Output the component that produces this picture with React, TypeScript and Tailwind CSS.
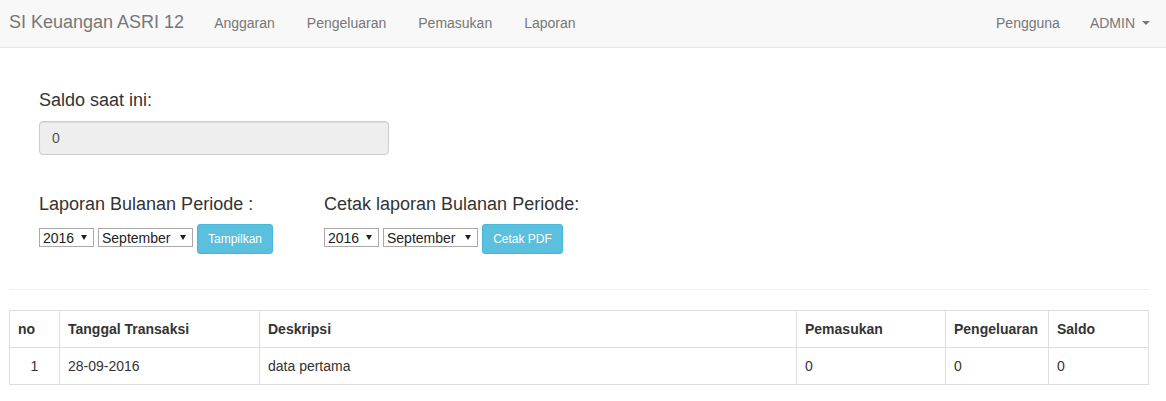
import React from 'react';

const navLinks = ['Anggaran', 'Pengeluaran', 'Pemasukan', 'Laporan'];

const rows = [
  { no: 1, tanggal: '28-09-2016', deskripsi: 'data pertama', masuk: 0, keluar: 0, saldo: 0 },
];

function FakeSelect({ value, width }: { value: string; width: string }) {
  return (
    <div
      className={`${width} h-[19px] mt-[4px] flex items-center justify-between border border-[#a9a9a9] bg-white pl-[3px] pr-[6px] text-[14px] leading-none text-[#222]`}
    >
      <span>{value}</span>
      <svg width="6" height="5" viewBox="0 0 6 5">
        <polygon points="0,0 6,0 3,5" fill="#222" />
      </svg>
    </div>
  );
}

function PeriodForm({ label, button, buttonWidth }: { label: string; button: string; buttonWidth: string }) {
  return (
    <div>
      <h4 className="text-[18px] leading-[20px] text-[#333]">{label}</h4>
      <div className="mt-[10px] flex items-start">
        <FakeSelect value="2016" width="w-[55px]" />
        <div className="ml-[4px]">
          <FakeSelect value="September" width="w-[95px]" />
        </div>
        <button
          className={`ml-[4px] ${buttonWidth} h-[30px] rounded-[3px] border border-[#46b8da] bg-[#5bc0de] text-[12px] text-white`}
        >
          {button}
        </button>
      </div>
    </div>
  );
}

export default function App() {
  return (
    <div className="min-h-screen bg-white font-['Liberation_Sans',Arial,sans-serif] text-[14px] text-[#333]">
      <nav className="h-[48px] bg-[#f8f8f8] border-b border-[#e7e7e7] flex items-start justify-between text-[#777]">
        <div className="flex items-start">
          <a className="ml-[9px] mt-[12px] text-[18px] leading-[20px]">SI Keuangan ASRI 12</a>
          <ul className="ml-[14px] flex">
            {navLinks.map((l) => (
              <li key={l} className="px-[16px] mt-[13px] leading-[20px]">
                {l}
              </li>
            ))}
          </ul>
        </div>
        <ul className="mr-[1px] flex">
          <li className="px-[15px] mt-[13px] leading-[20px]">Pengguna</li>
          <li className="px-[15px] mt-[13px] leading-[20px] flex items-center">
            ADMIN
            <span className="ml-[7px] w-0 h-0 border-x-[4px] border-x-transparent border-t-[4px] border-t-[#777]" />
          </li>
        </ul>
      </nav>

      <div className="pl-[9px]">
        <div className="pl-[30px]">
          <h4 className="mt-[42px] text-[18px] leading-[20px]">Saldo saat ini:</h4>
          <div className="mt-[11px] w-[350px] h-[34px] flex items-center rounded-[4px] border border-[#ccc] bg-[#eee] px-[12px] text-[#555] shadow-[inset_0_1px_1px_rgba(0,0,0,0.075)]">
            0
          </div>

          <div className="mt-[39px] flex">
            <div className="w-[285px]">
              <PeriodForm label="Laporan Bulanan Periode :" button="Tampilkan" buttonWidth="w-[76px]" />
            </div>
            <PeriodForm label="Cetak laporan Bulanan Periode:" button="Cetak PDF" buttonWidth="w-[81px]" />
          </div>
        </div>

        <hr className="mt-[35px] w-[1140px] border-t border-[#eee]" />

        <table className="mt-[20px] w-[1140px] table-fixed border-collapse border border-[#ddd]">
          <colgroup>
            <col className="w-[50px]" />
            <col className="w-[200px]" />
            <col className="w-[537px]" />
            <col className="w-[149px]" />
            <col className="w-[103px]" />
            <col className="w-[100px]" />
          </colgroup>
          <thead>
            <tr>
              {['no', 'Tanggal Transaksi', 'Deskripsi', 'Pemasukan', 'Pengeluaran', 'Saldo'].map((h) => (
                <th key={h} className="border border-[#ddd] p-[8px] text-left font-bold leading-[20px]">
                  {h}
                </th>
              ))}
            </tr>
          </thead>
          <tbody>
            {rows.map((r) => (
              <tr key={r.no}>
                <td className="border border-[#ddd] p-[8px] text-center leading-[20px]">{r.no}</td>
                <td className="border border-[#ddd] p-[8px] leading-[20px]">{r.tanggal}</td>
                <td className="border border-[#ddd] p-[8px] leading-[20px]">{r.deskripsi}</td>
                <td className="border border-[#ddd] p-[8px] leading-[20px]">{r.masuk}</td>
                <td className="border border-[#ddd] p-[8px] leading-[20px]">{r.keluar}</td>
                <td className="border border-[#ddd] p-[8px] leading-[20px]">{r.saldo}</td>
              </tr>
            ))}
          </tbody>
        </table>
      </div>
    </div>
  );
}
